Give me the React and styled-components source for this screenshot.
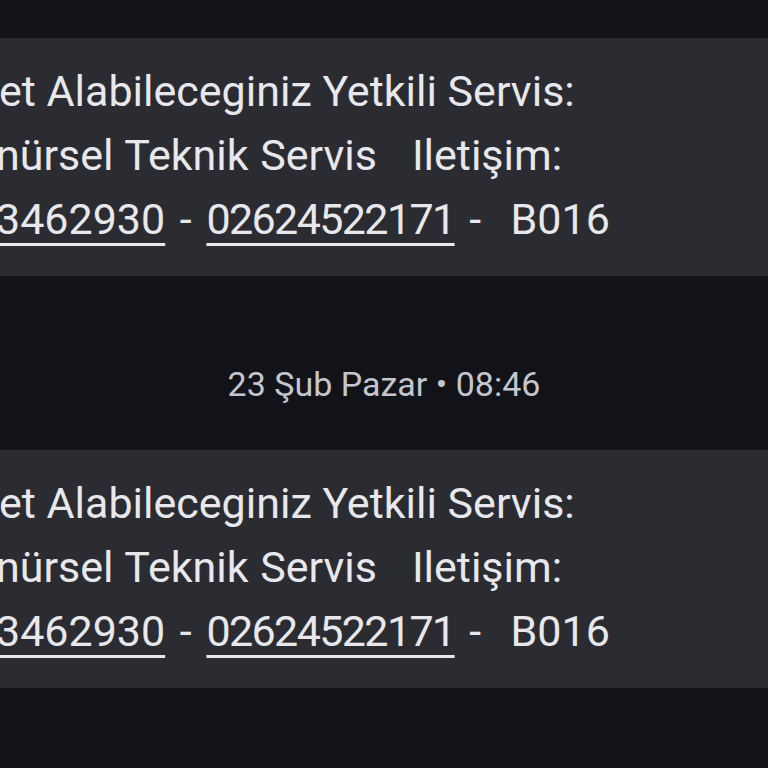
import React from "react";
import styled, { createGlobalStyle } from "styled-components";

const GlobalStyle = createGlobalStyle`
  html, body {
    margin: 0;
    padding: 0;
    background: #121318;
  }
  body {
    font-family: Roboto, "Noto Sans", sans-serif;
    -webkit-font-smoothing: antialiased;
  }
`;

const Screen = styled.div`
  width: 768px;
  height: 768px;
  overflow: hidden;
  background: #121318;
  display: flex;
  flex-direction: column;
  padding-top: 38px;
  box-sizing: border-box;
`;

const Bubble = styled.div`
  background: #2b2c31;
  padding: 21px 0 25px;
  color: #e8e8ec;
  font-size: 43px;
  line-height: 64px;
  overflow: hidden;
  white-space: pre;
`;

const Line = styled.div`
  margin-left: ${(p) => p.$shift || 0}px;
  word-spacing: ${(p) => p.$spread || 0}px;
`;

const Phone = styled.span`
  letter-spacing: ${(p) => (p.$tight ? "-1.6px" : "0")};
  text-decoration: underline;
  text-decoration-thickness: 3px;
  text-underline-offset: 9px;
`;

const Stamp = styled.div`
  height: 174px;
  display: flex;
  align-items: center;
  justify-content: center;
  color: #c5c6cd;
  font-size: 34px;
  padding-top: 42px;
  box-sizing: border-box;
`;

const Message = () => (
  <Bubble>
    <Line $shift={-1}>et Alabileceginiz Yetkili Servis:</Line>
    <Line $shift={-4} $spread={1}>nürsel Teknik Servis   Iletişim:</Line>
    <Line $shift={-4} $spread={4}>
      <Phone>3462930</Phone> - <Phone $tight>02624522171</Phone> -  B016
    </Line>
  </Bubble>
);

export default function App() {
  return (
    <>
      <GlobalStyle />
      <Screen>
        <Message />
        <Stamp>23 Şub Pazar • 08:46</Stamp>
        <Message />
      </Screen>
    </>
  );
}
